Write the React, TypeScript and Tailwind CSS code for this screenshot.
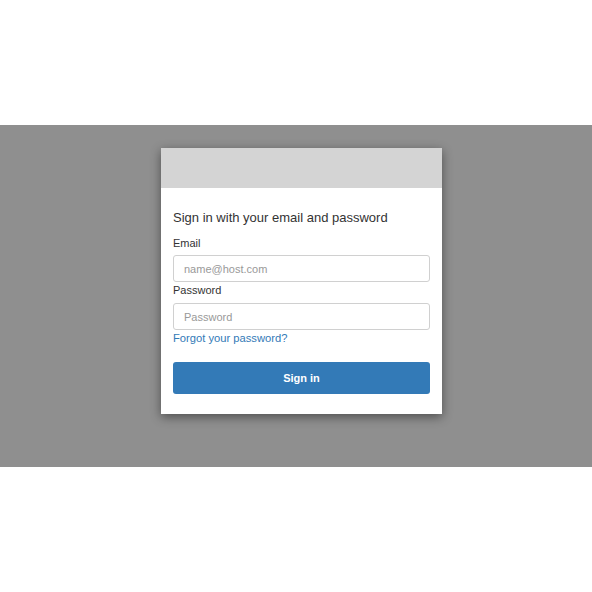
export default function App() {
  return (
    <div className="h-[592px] w-[592px] bg-white pt-[125px]" style={{ fontFamily: '"Liberation Sans", Arial, sans-serif' }}>
      <div className="h-[342px] bg-[#8f8f8f] pt-[23px]">
        {/* Card */}
        <div className="ml-[161px] w-[281px] bg-white shadow-[0_3px_10px_rgba(0,0,0,0.45)]">
          <div className="h-[40px] bg-[#d4d4d4]" />
          <div className="px-[12px] pt-[21px] pb-[20px]">
            <div className="text-[13px] leading-[18px] text-[#333]">Sign in with your email and password</div>
            <label className="mt-[9px] block text-[11px] leading-[14px] text-[#333]">Email</label>
            <input
              placeholder="name@host.com"
              className="mt-[5px] block h-[27px] w-full rounded-[3px] border border-[#d0d0d0] px-[10px] text-[11px] text-[#555] placeholder-[#999] outline-none"
            />
            <label className="mt-[1px] block text-[11px] leading-[14px] text-[#333]">Password</label>
            <input
              type="password"
              placeholder="Password"
              className="mt-[6px] block h-[27px] w-full rounded-[3px] border border-[#d0d0d0] px-[10px] text-[11px] text-[#555] placeholder-[#999] outline-none"
            />
            <a className="mt-[1px] block text-[11.2px] leading-[14px] text-[#337ab7]">Forgot your password?</a>
            <button className="mt-[17px] block h-[32px] w-full rounded-[3px] bg-[#337ab7] text-[11px] font-bold text-white">
              Sign in
            </button>
          </div>
        </div>
      </div>
    </div>
  )
}
